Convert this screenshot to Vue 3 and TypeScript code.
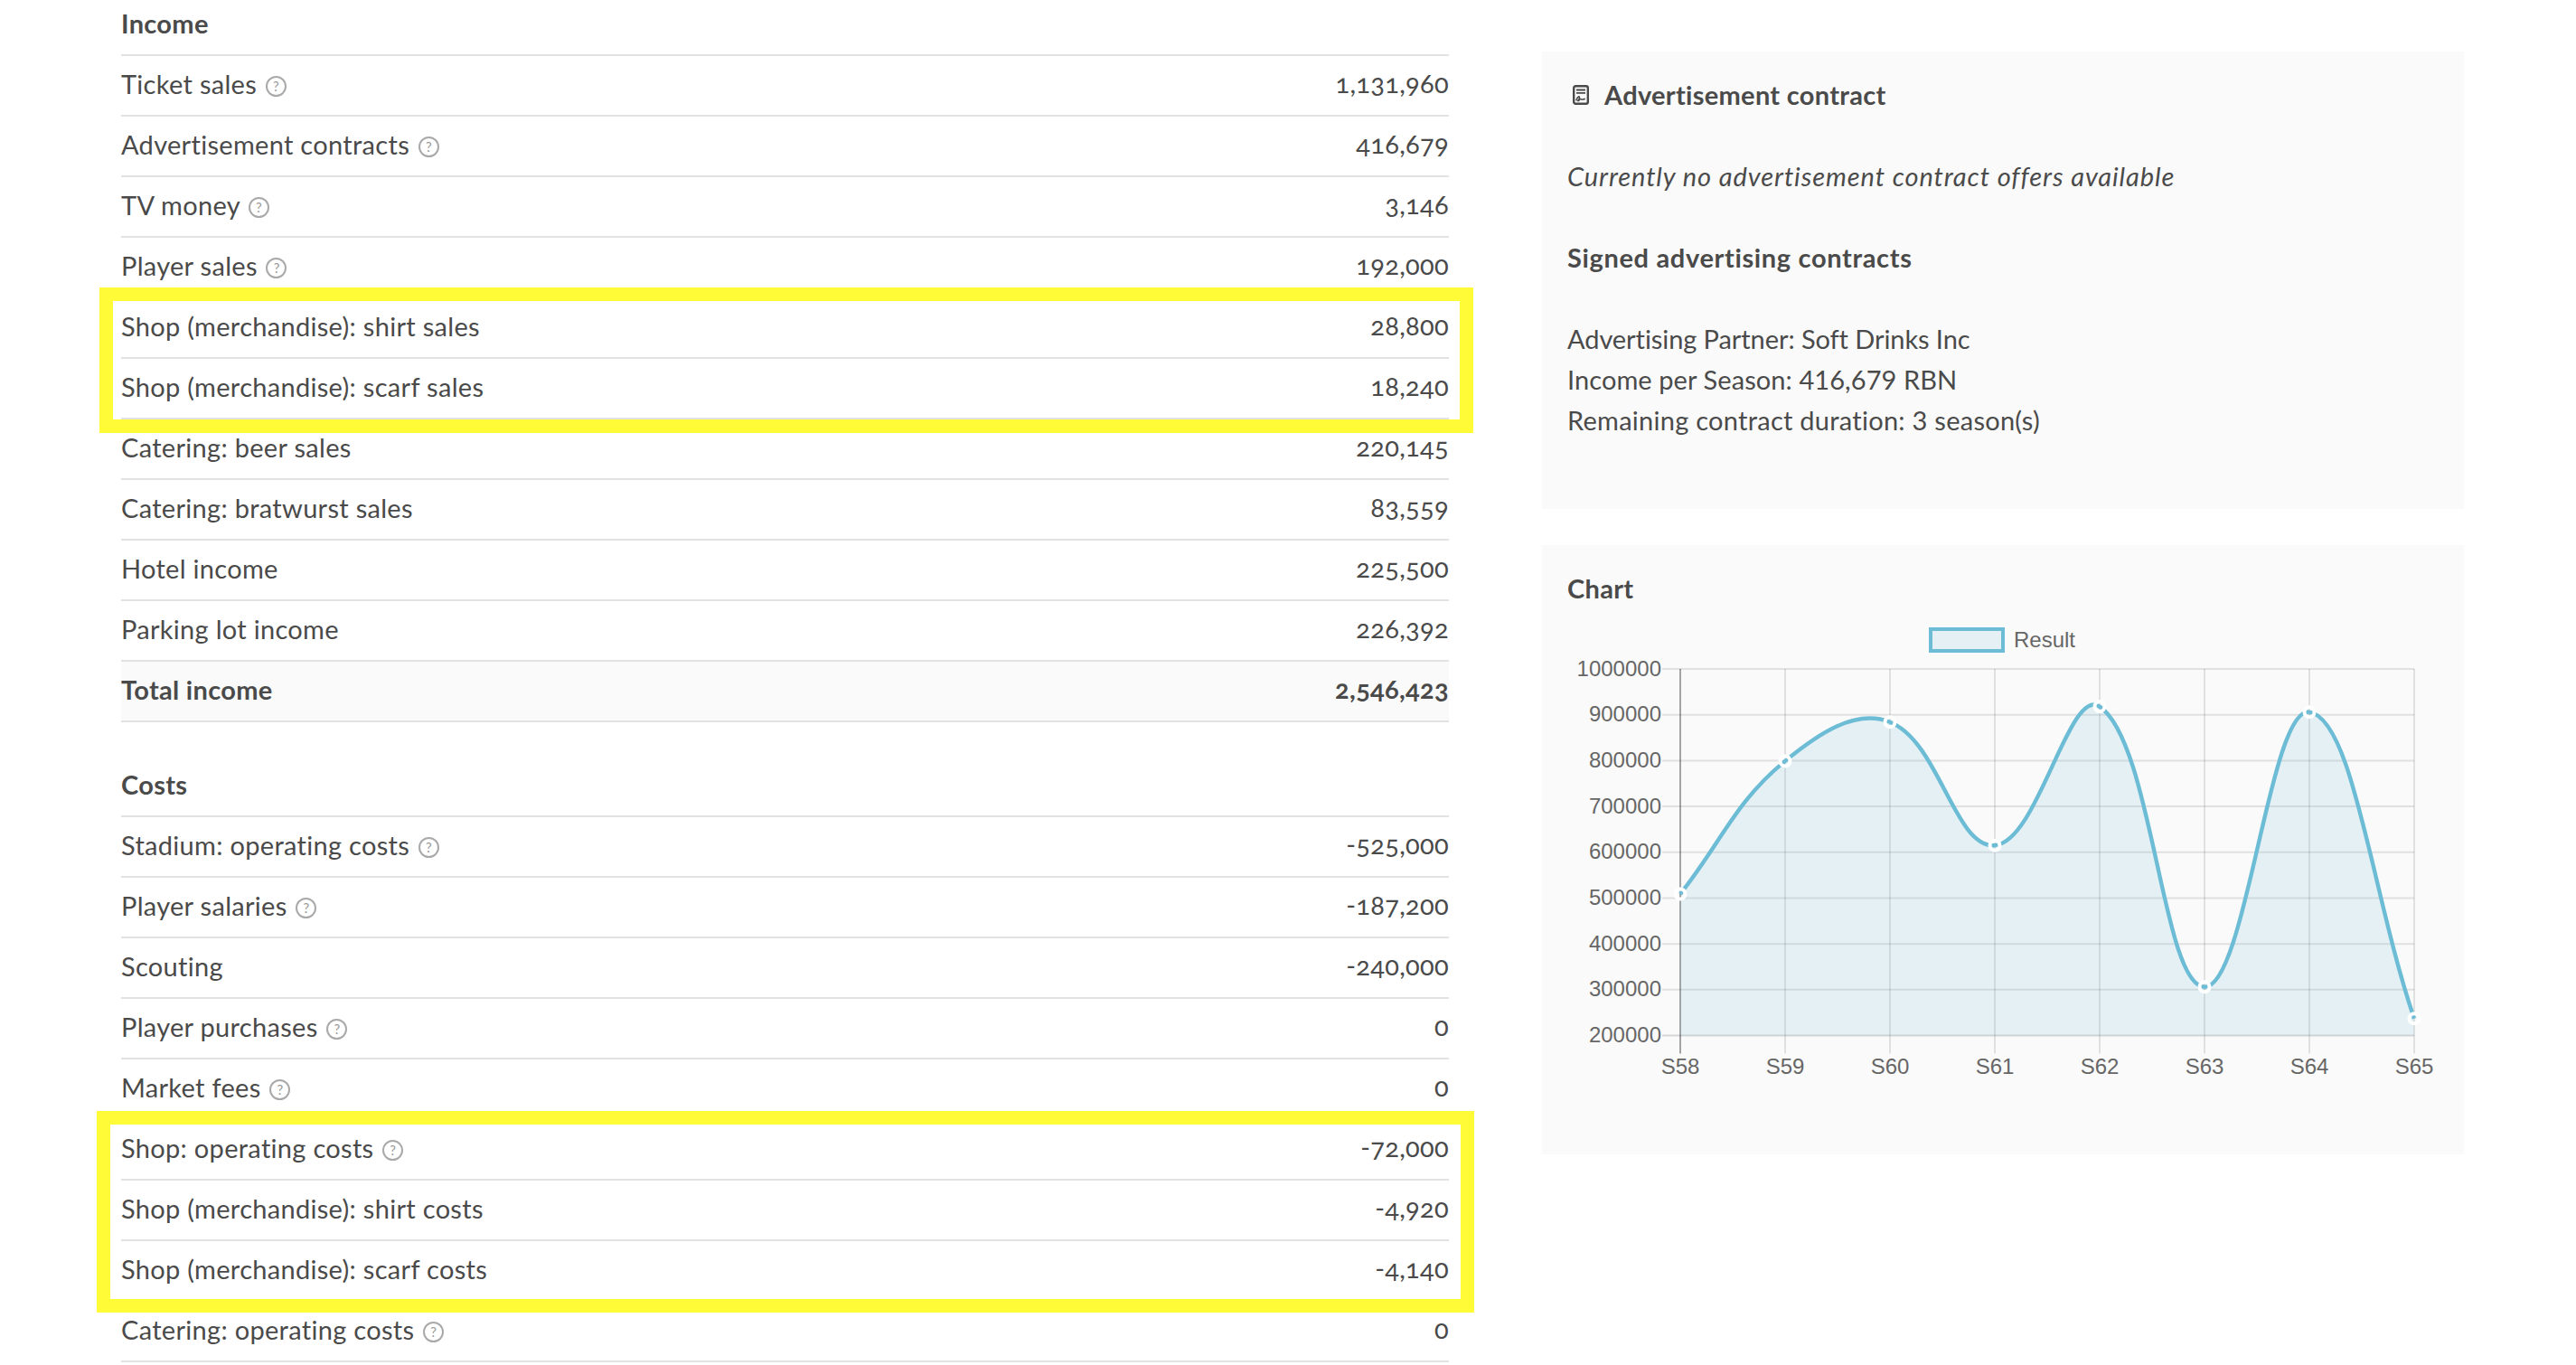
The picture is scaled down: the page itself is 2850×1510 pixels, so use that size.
<template>
  <div class="page">
    <div class="finances">
      <table v-for="group in groups" :key="group.title" class="fin-table">
        <thead>
          <tr>
            <th colspan="2">{{ group.title }}</th>
          </tr>
        </thead>
        <tbody>
          <tr v-for="row in group.rows" :key="row.label" :class="{ total: row.total }">
            <td>
              {{ row.label }}
              <span v-if="row.help" class="help">?</span>
            </td>
            <td class="num">{{ row.value }}</td>
          </tr>
        </tbody>
      </table>
      <div class="mark mark-income"></div>
      <div class="mark mark-costs"></div>
    </div>

    <div class="side">
      <section class="panel contract">
        <h4>
          <svg class="contract-icon" viewBox="0 0 18 22" width="18" height="22">
            <rect x="1.2" y="1.2" width="15.6" height="19.6" rx="2" fill="none" stroke="#4a4a4a" stroke-width="2.4" />
            <path d="M4 5.5h10M4 8.8h10" stroke="#4a4a4a" stroke-width="1.8" fill="none" />
            <path d="M3.8 17.2c1.5-5 4.4-5.4 3.6-2.6-.5 1.9-2.2 2.8-1.8 3 1.2.3 2.4-2.6 3.6-1.9.8.5 1.3 1 4.6-.4" stroke="#4a4a4a" stroke-width="1.5" fill="none" />
          </svg>
          Advertisement contract
        </h4>
        <p class="none"><em>Currently no advertisement contract offers available</em></p>
        <h4 class="signed">Signed advertising contracts</h4>
        <div class="partner">Advertising Partner: Soft Drinks Inc</div>
        <div>Income per Season: 416,679 RBN</div>
        <div class="remaining">Remaining contract duration: 3 season(s)</div>
      </section>

      <section class="panel chart">
        <h4>Chart</h4>
        <svg class="chart-svg" viewBox="0 0 1020 601" width="1020" height="601">
          <g class="grid">
            <line v-for="(t, i) in yTicks" :key="t" :x1="133" :x2="plot.right" :y1="yOf(t)" :y2="yOf(t)" :class="{ base: i === yTicks.length - 1 }" />
            <line v-for="(p, i) in points" :key="p.label" :x1="p.x" :x2="p.x" :y1="plot.top" :y2="plot.bottom + 20" :class="{ axis: i === 0 }" />
          </g>
          <path :d="areaPath" fill="rgba(108, 188, 214, 0.15)" />
          <path :d="linePath" fill="none" stroke="#6cbcd6" stroke-width="4.4" />
          <circle v-for="p in points" :key="p.label" :cx="p.x" :cy="p.y" r="5.5" fill="none" stroke="#fff" stroke-width="4" />
          <rect x="430" y="20" width="80" height="24" fill="rgba(108, 188, 214, 0.15)" stroke="#6cbcd6" stroke-width="4" />
          <text x="522" y="31" class="tick" dominant-baseline="central">Result</text>
          <text v-for="t in yTicks" :key="t" x="132" :y="yOf(t) - 1" class="tick" text-anchor="end" dominant-baseline="central">{{ t }}</text>
          <text v-for="p in points" :key="p.label" :x="p.x" y="503" class="tick" text-anchor="middle" dominant-baseline="central">{{ p.label }}</text>
        </svg>
      </section>
    </div>
  </div>
</template>

<script setup lang="ts">
import { computed } from 'vue'

interface Row {
  label: string
  value: string
  help?: boolean
  total?: boolean
}

const groups: { title: string; rows: Row[] }[] = [
  {
    title: 'Income',
    rows: [
      { label: 'Ticket sales', value: '1,131,960', help: true },
      { label: 'Advertisement contracts', value: '416,679', help: true },
      { label: 'TV money', value: '3,146', help: true },
      { label: 'Player sales', value: '192,000', help: true },
      { label: 'Shop (merchandise): shirt sales', value: '28,800' },
      { label: 'Shop (merchandise): scarf sales', value: '18,240' },
      { label: 'Catering: beer sales', value: '220,145' },
      { label: 'Catering: bratwurst sales', value: '83,559' },
      { label: 'Hotel income', value: '225,500' },
      { label: 'Parking lot income', value: '226,392' },
      { label: 'Total income', value: '2,546,423', total: true }
    ]
  },
  {
    title: 'Costs',
    rows: [
      { label: 'Stadium: operating costs', value: '-525,000', help: true },
      { label: 'Player salaries', value: '-187,200', help: true },
      { label: 'Scouting', value: '-240,000' },
      { label: 'Player purchases', value: '0', help: true },
      { label: 'Market fees', value: '0', help: true },
      { label: 'Shop: operating costs', value: '-72,000', help: true },
      { label: 'Shop (merchandise): shirt costs', value: '-4,920' },
      { label: 'Shop (merchandise): scarf costs', value: '-4,140' },
      { label: 'Catering: operating costs', value: '0', help: true }
    ]
  }
]

const plot = { left: 153, right: 965, top: 64, bottom: 469.5, step: 116 }
const yTicks = [1000000, 900000, 800000, 700000, 600000, 500000, 400000, 300000, 200000]
const results = [509000, 799000, 884000, 615000, 918000, 306000, 906000, 237000]

const yOf = (v: number) => plot.top + ((1000000 - v) / 800000) * (plot.bottom - plot.top)

const points = results.map((v, i) => ({
  label: 'S' + (58 + i),
  x: plot.left + plot.step * i,
  y: yOf(v)
}))

// same spline the chart lib uses, tension 0.4
const linePath = computed(() => {
  const t = 0.4
  const ctrl = points.map((p, i) => {
    const prev = points[i - 1] || p
    const next = points[i + 1] || p
    const d01 = Math.hypot(p.x - prev.x, p.y - prev.y)
    const d12 = Math.hypot(next.x - p.x, next.y - p.y)
    const sum = d01 + d12
    const fa = (t * d01) / sum
    const fb = (t * d12) / sum
    return {
      inX: p.x - fa * (next.x - prev.x),
      inY: p.y - fa * (next.y - prev.y),
      outX: p.x + fb * (next.x - prev.x),
      outY: p.y + fb * (next.y - prev.y)
    }
  })
  let d = `M${points[0].x} ${points[0].y}`
  for (let i = 1; i < points.length; i++) {
    d += ` C${ctrl[i - 1].outX} ${ctrl[i - 1].outY} ${ctrl[i].inX} ${ctrl[i].inY} ${points[i].x} ${points[i].y}`
  }
  return d
})

const areaPath = computed(() => `${linePath.value} L${plot.right} ${plot.bottom} L${plot.left} ${plot.bottom} Z`)
</script>

<style scoped>
.page {
  display: flex;
  align-items: flex-start;
  gap: 103px;
  padding-left: 134px;
  font-family: Lato, "Liberation Sans", sans-serif;
  font-size: 29px;
  letter-spacing: 0.3px;
  color: #4a4a4a;
}

.finances {
  position: relative;
  width: 1469px;
  margin-top: -5px;
}

.fin-table {
  width: 100%;
  border-collapse: separate;
  border-spacing: 0;
  margin-bottom: 38px;
}

.fin-table th,
.fin-table td {
  box-sizing: border-box;
  height: 67px;
  padding: 0 0 4px;
  border-bottom: 2px solid #e2e2e2;
  text-align: left;
  font-weight: 400;
}

.fin-table th {
  font-weight: 700;
}

.fin-table td.num {
  text-align: right;
  padding-bottom: 7px;
  letter-spacing: 0.3px;
  font-variant-numeric: oldstyle-nums;
}

.total td {
  background: #fafafa;
  font-weight: 700;
}

.help {
  display: inline-flex;
  align-items: center;
  justify-content: center;
  box-sizing: border-box;
  width: 23px;
  height: 23px;
  margin-left: 2px;
  border: 2px solid #a9a9a9;
  border-radius: 50%;
  color: #999;
  font-size: 15px;
  letter-spacing: 0;
  vertical-align: 3px;
}

.mark {
  position: absolute;
  box-sizing: border-box;
  border: 15px solid #fffb37;
  pointer-events: none;
}

.mark-income {
  left: -24px;
  top: 323px;
  width: 1520px;
  height: 161px;
}

.mark-costs {
  left: -27px;
  top: 1234px;
  width: 1524px;
  height: 223px;
}

.side {
  width: 1020px;
  margin-top: 57px;
  letter-spacing: 0.08px;
}

.panel {
  box-sizing: border-box;
  padding: 25px 28px 0;
  background: #fafafa;
  line-height: 45px;
  margin-bottom: 40px;
}

.panel h4 {
  margin: 0 0 45px;
  font-size: 29px;
  font-weight: 700;
  letter-spacing: 0.3px;
}

.panel h4.signed {
  letter-spacing: 0.65px;
}

.partner {
  letter-spacing: -0.08px;
}

.remaining {
  letter-spacing: 0.26px;
}

.contract {
  height: 506px;
}

.contract h4:first-child {
  display: flex;
  align-items: center;
  gap: 17px;
  padding-left: 6px;
}

.contract-icon {
  display: block;
}

.none {
  margin: 0 0 45px;
  letter-spacing: 0.93px;
}

.chart {
  height: 674px;
  padding-top: 25px;
}

.chart h4 {
  margin: 0;
}

.chart-svg {
  display: block;
  margin-left: -28px;
  margin-top: 3px;
}

.grid line {
  stroke: rgba(0, 0, 0, 0.1);
  stroke-width: 2;
}

.grid line.axis {
  stroke: rgba(0, 0, 0, 0.35);
}

.grid line.base {
  stroke: rgba(0, 0, 0, 0.14);
}

.tick {
  font-family: "Liberation Sans", Arial, sans-serif;
  font-size: 24px;
  letter-spacing: 0;
  fill: #666;
}
</style>

<style>
body {
  background: #fff;
}
</style>
